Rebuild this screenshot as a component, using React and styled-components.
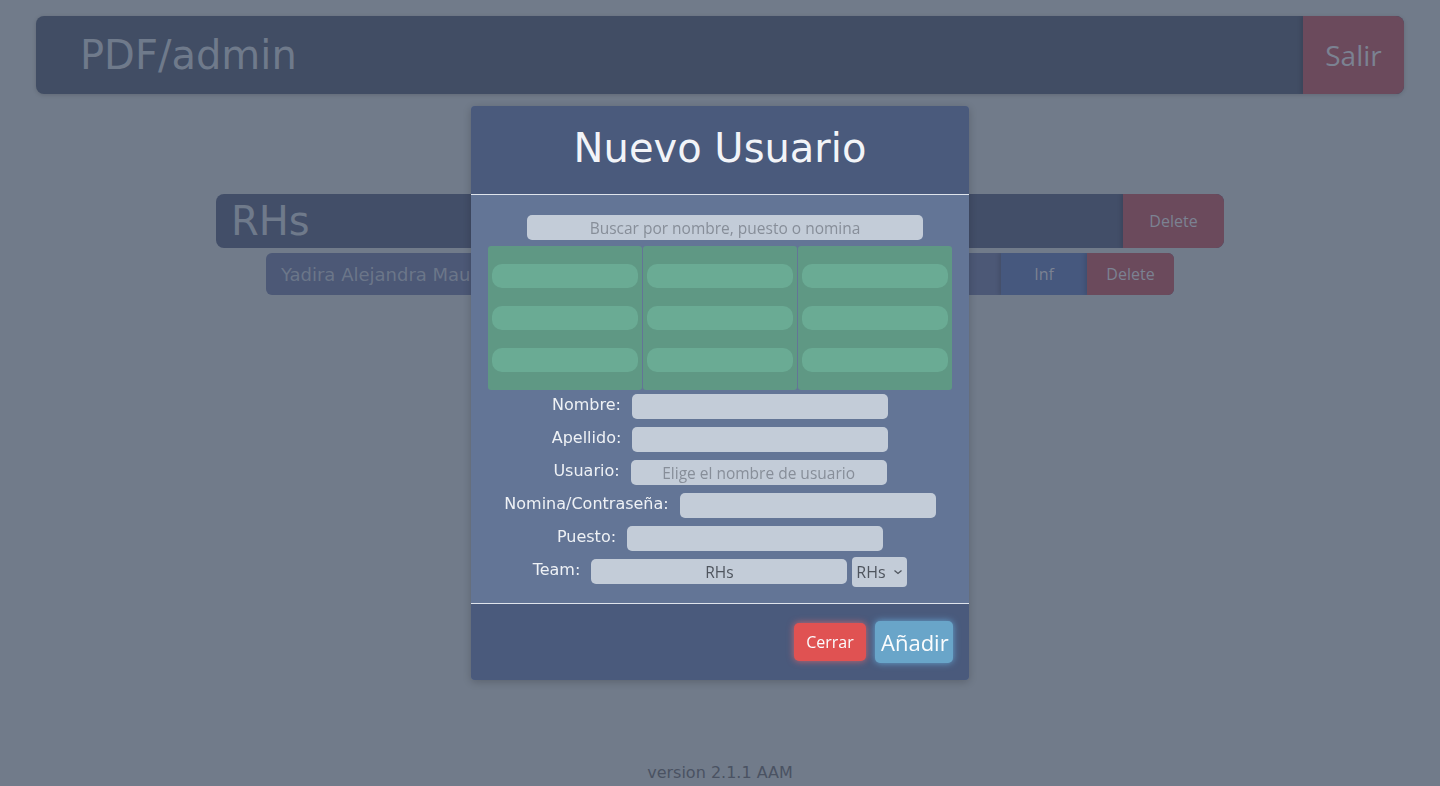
import React from 'react';
import styled, { createGlobalStyle } from 'styled-components';

const GlobalStyle = createGlobalStyle`
  html, body {
    margin: 0;
    padding: 0;
  }
  body {
    background-color: #717b8a;
    font-family: "DejaVu Sans", Verdana, sans-serif;
  }
  * {
    box-sizing: border-box;
  }
`;

const uiFont = `"Open Sans", "Noto Sans", sans-serif`;

const chevron = `url("data:image/svg+xml,%3Csvg xmlns='http://www.w3.org/2000/svg' width='10' height='6' viewBox='0 0 10 6'%3E%3Cpath d='M1.5 1.5l3.5 3 3.5-3' fill='none' stroke='%234f555e' stroke-width='1.3'/%3E%3C/svg%3E")`;

const Page = styled.div`
  min-height: 100vh;
  display: flex;
  flex-direction: column;
  padding: 16px 36px 4px;
`;

const TopBar = styled.header`
  display: flex;
  height: 78px;
  background-color: #414d64;
  border-radius: 8px;
  overflow: hidden;
  box-shadow: 0 1px 4px rgba(0, 0, 0, 0.15);
`;

const Brand = styled.h1`
  flex: 1;
  margin: 0;
  padding-left: 44px;
  display: flex;
  align-items: center;
  font-size: 40px;
  font-weight: normal;
  color: #6f7a8b;
`;

const DimButton = styled.button`
  border: none;
  cursor: pointer;
  font-family: ${uiFont};
  color: #7b8292;
  background-color: ${({ $tone }) => ($tone === 'blue' ? '#46587e' : '#6b4a5c')};
  width: ${({ $w }) => $w}px;
  font-size: ${({ $size }) => $size || 16}px;
  box-shadow: -2px 0 4px rgba(0, 0, 0, 0.12);
`;

const Teams = styled.section`
  width: 1008px;
  margin: 100px auto 0;
  display: flex;
  flex-direction: column;
  align-items: center;
  gap: 5px;
`;

const TeamBar = styled.div`
  width: 100%;
  height: 54px;
  display: flex;
  background-color: #424e68;
  border-radius: 8px;
  overflow: hidden;
`;

const TeamName = styled.div`
  flex: 1;
  padding-left: 15px;
  display: flex;
  align-items: center;
  font-size: 40px;
  color: #6f7a8b;
`;

const MemberRow = styled.div`
  width: 908px;
  height: 42px;
  display: flex;
  background-color: #4c5876;
  border-radius: 6px;
  overflow: hidden;
`;

const MemberName = styled.div`
  flex: 1;
  padding-left: 15px;
  display: flex;
  align-items: center;
  font-size: 18px;
  color: #6b7689;
  white-space: nowrap;
`;

const Version = styled.footer`
  margin-top: auto;
  text-align: center;
  font-size: 16px;
  line-height: 19px;
  color: #4a5262;
`;

const Overlay = styled.div`
  position: fixed;
  inset: 0;
  display: flex;
  justify-content: center;
  align-items: flex-start;
  padding-top: 106px;
`;

const Modal = styled.div`
  width: 498px;
  border-radius: 4px;
  overflow: hidden;
  background-color: #637596;
  box-shadow: 0 2px 8px rgba(0, 0, 0, 0.2);
`;

const ModalHeader = styled.div`
  height: 89px;
  padding-bottom: 4px;
  background-color: #4a5a7c;
  border-bottom: 1px solid #dfe4ec;
  display: flex;
  align-items: center;
  justify-content: center;
`;

const ModalTitle = styled.h2`
  margin: 0;
  font-size: 40px;
  font-weight: normal;
  color: #f2f4f8;
`;

const ModalBody = styled.div`
  padding: 20px 17px 19px;
  display: flex;
  flex-direction: column;
  align-items: center;
  border-bottom: 1px solid #dfe4ec;
`;

const Field = styled.input`
  width: ${({ $w }) => $w || 256}px;
  height: 25px;
  margin-left: ${({ $shift }) => $shift || 0}px;
  border: none;
  border-radius: 5px;
  background-color: #c3ccd8;
  font-family: ${uiFont};
  font-size: 15.5px;
  text-align: center;
  color: #4f555e;
  padding: 0 6px;
  outline: none;
  &::placeholder {
    color: #878e99;
  }
`;

const ResultGrid = styled.div`
  width: 100%;
  margin-top: 6px;
  display: grid;
  grid-template-columns: repeat(3, 1fr);
  gap: 1px;
`;

const ResultColumn = styled.div`
  background-color: #5f9884;
  border-radius: 3px;
  padding: 18px 4px;
  display: flex;
  flex-direction: column;
  gap: 18px;
`;

const ResultPill = styled.div`
  height: 24px;
  border-radius: 10px;
  background-color: #6aab94;
`;

const Form = styled.div`
  margin-top: 4px;
  display: flex;
  flex-direction: column;
  gap: 8px;
`;

const Row = styled.div`
  display: flex;
  justify-content: center;
  align-items: flex-start;
  height: 25px;
`;

const Label = styled.label`
  font-size: 16px;
  line-height: 21px;
  color: #eef1f5;
  margin-right: 11px;
`;

const Select = styled.select`
  appearance: none;
  margin: -2px 0 0 5px;
  width: 55px;
  height: 30px;
  border: none;
  border-radius: 4px;
  background: #c3ccd8 ${chevron} no-repeat right 4px center;
  font-family: ${uiFont};
  font-size: 16px;
  color: #4f555e;
  padding: 0 0 0 4px;
`;

const ModalFooter = styled.div`
  height: 76px;
  background-color: #4a5a7c;
  display: flex;
  align-items: center;
  justify-content: flex-end;
  gap: 9px;
  padding-right: 16px;
`;

const ActionButton = styled.button`
  border: none;
  border-radius: 5px;
  cursor: pointer;
  font-family: ${uiFont};
  color: #fbfcfd;
  background-color: ${({ $primary }) => ($primary ? '#69a5c9' : '#e05252')};
  font-size: ${({ $primary }) => ($primary ? 22 : 16)}px;
  height: ${({ $primary }) => ($primary ? 42 : 38)}px;
  width: ${({ $primary }) => ($primary ? 78 : 72)}px;
  box-shadow: 0 0 7px
    ${({ $primary }) => ($primary ? 'rgba(110, 190, 240, 0.75)' : 'rgba(255, 110, 110, 0.7)')};
`;

const fields = [
  { label: 'Nombre:' },
  { label: 'Apellido:' },
  { label: 'Usuario:', placeholder: 'Elige el nombre de usuario' },
  { label: 'Nomina/Contraseña:' },
  { label: 'Puesto:' },
];

const App = () => {
  return (
    <>
      <GlobalStyle />
      <Page>
        <TopBar>
          <Brand>PDF/admin</Brand>
          <DimButton $w={101} $size={28}>Salir</DimButton>
        </TopBar>

        <Teams>
          <TeamBar>
            <TeamName>RHs</TeamName>
            <DimButton $w={101}>Delete</DimButton>
          </TeamBar>
          <MemberRow>
            <MemberName>Yadira Alejandra Mauricio</MemberName>
            <DimButton $w={86} $tone="blue">Inf</DimButton>
            <DimButton $w={87}>Delete</DimButton>
          </MemberRow>
        </Teams>

        <Version>version 2.1.1 AAM</Version>
      </Page>

      <Overlay>
        <Modal>
          <ModalHeader>
            <ModalTitle>Nuevo Usuario</ModalTitle>
          </ModalHeader>
          <ModalBody>
            <Field $w={396} $shift={10} placeholder="Buscar por nombre, puesto o nomina" />
            <ResultGrid>
              {[0, 1, 2].map((c) => (
                <ResultColumn key={c}>
                  <ResultPill />
                  <ResultPill />
                  <ResultPill />
                </ResultColumn>
              ))}
            </ResultGrid>
            <Form>
              {fields.map((f) => (
                <Row key={f.label}>
                  <Label>{f.label}</Label>
                  <Field placeholder={f.placeholder} />
                </Row>
              ))}
              <Row>
                <Label>Team:</Label>
                <Field defaultValue="RHs" />
                <Select defaultValue="RHs">
                  <option>RHs</option>
                </Select>
              </Row>
            </Form>
          </ModalBody>
          <ModalFooter>
            <ActionButton>Cerrar</ActionButton>
            <ActionButton $primary>Añadir</ActionButton>
          </ModalFooter>
        </Modal>
      </Overlay>
    </>
  );
};

export default App;
